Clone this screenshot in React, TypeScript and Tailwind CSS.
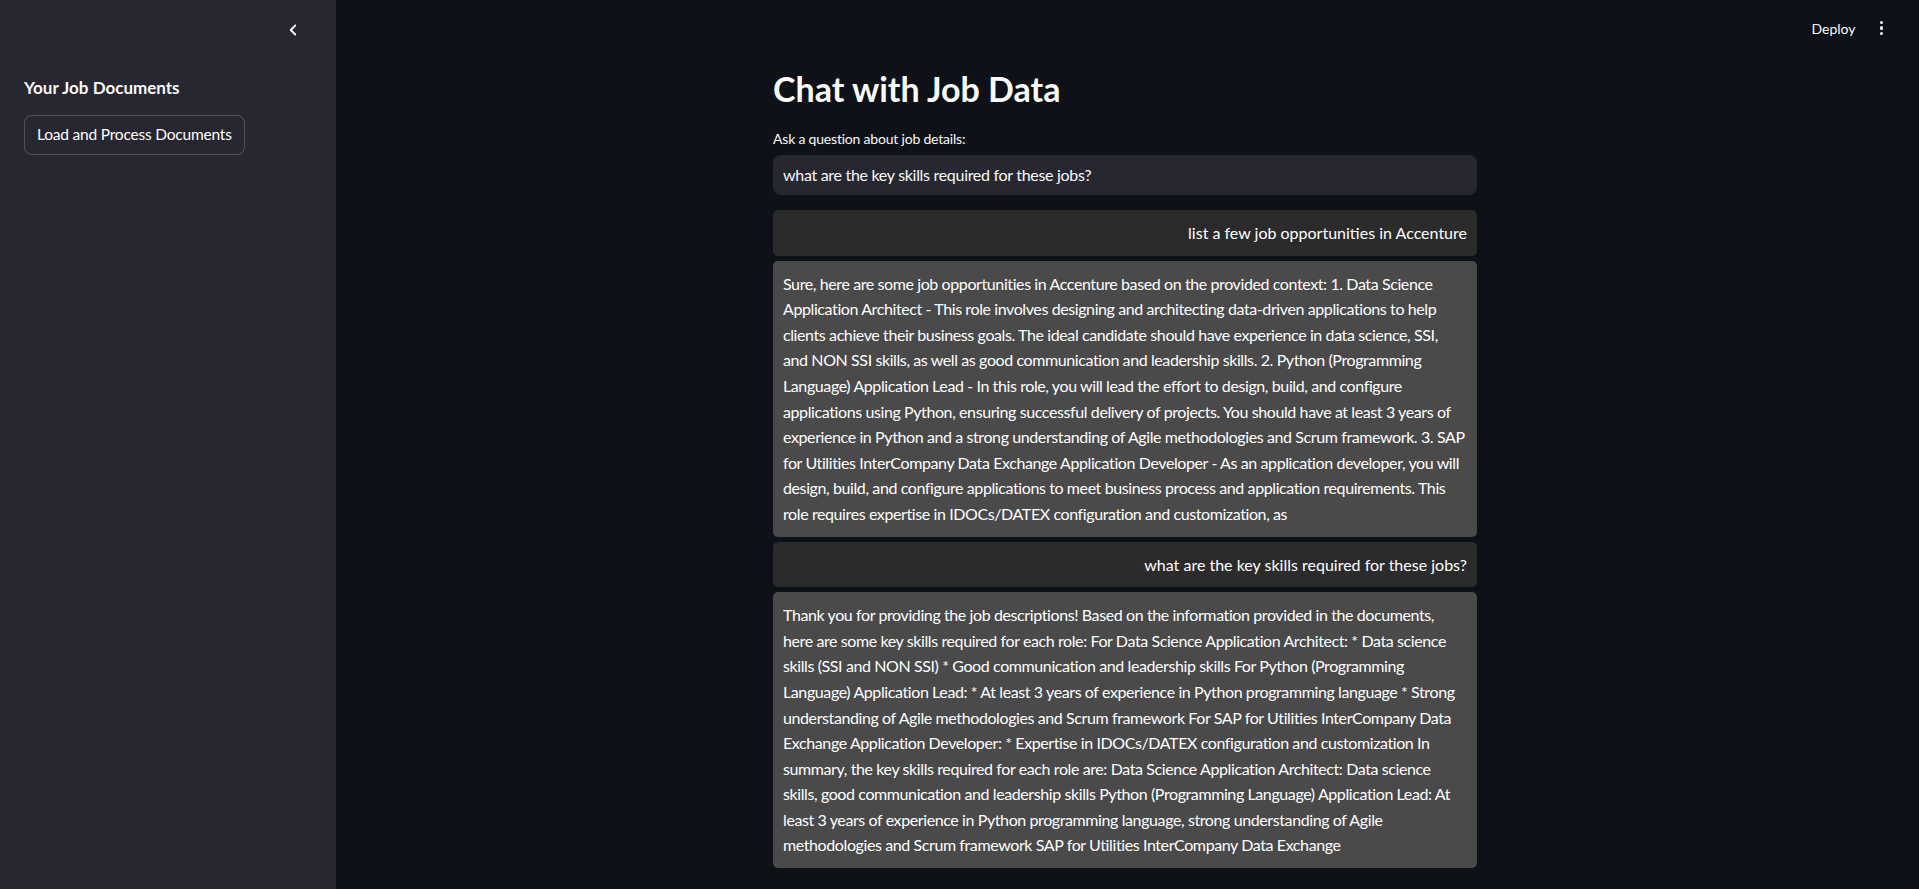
import React from 'react';
import { ChevronLeft } from 'lucide-react';

const firstAnswer = [
  'Sure, here are some job opportunities in Accenture based on the provided context: 1. Data Science',
  'Application Architect - This role involves designing and architecting data-driven applications to help',
  'clients achieve their business goals. The ideal candidate should have experience in data science, SSI,',
  'and NON SSI skills, as well as good communication and leadership skills. 2. Python (Programming',
  'Language) Application Lead - In this role, you will lead the effort to design, build, and configure',
  'applications using Python, ensuring successful delivery of projects. You should have at least 3 years of',
  'experience in Python and a strong understanding of Agile methodologies and Scrum framework. 3. SAP',
  'for Utilities InterCompany Data Exchange Application Developer - As an application developer, you will',
  'design, build, and configure applications to meet business process and application requirements. This',
  'role requires expertise in IDOCs/DATEX configuration and customization, as',
];

const secondAnswer = [
  'Thank you for providing the job descriptions! Based on the information provided in the documents,',
  'here are some key skills required for each role: For Data Science Application Architect: * Data science',
  'skills (SSI and NON SSI) * Good communication and leadership skills For Python (Programming',
  'Language) Application Lead: * At least 3 years of experience in Python programming language * Strong',
  'understanding of Agile methodologies and Scrum framework For SAP for Utilities InterCompany Data',
  'Exchange Application Developer: * Expertise in IDOCs/DATEX configuration and customization In',
  'summary, the key skills required for each role are: Data Science Application Architect: Data science',
  'skills, good communication and leadership skills Python (Programming Language) Application Lead: At',
  'least 3 years of experience in Python programming language, strong understanding of Agile',
  'methodologies and Scrum framework SAP for Utilities InterCompany Data Exchange',
];

const UserMessage = ({ text }: { text: string }) => (
  <div className="bg-[#2b2b2b] rounded-[5px] px-[10px] py-[10px] text-right leading-[25.6px]">{text}</div>
);

const BotMessage = ({ lines }: { lines: string[] }) => (
  <div className="bg-[#4a4a4a] rounded-[5px] px-[10px] py-[10px] leading-[25.6px] tracking-[-0.4px]">
    {lines.map((l, i) => (
      <span key={i} className="block whitespace-nowrap">
        {l}
      </span>
    ))}
  </div>
);

const App = () => {
  return (
    <div className="flex h-screen w-full overflow-hidden bg-[#0e1117] text-[#fafafa] font-['Lato',sans-serif]">
      <aside className="w-[336px] shrink-0 bg-[#262730] px-6">
        <div className="flex justify-end pt-[21px] pr-[10px]">
          <ChevronLeft className="w-[18px] h-[18px] text-white" strokeWidth={2.5} />
        </div>
        <h2 className="mt-[37px] text-[17px] font-bold leading-[24px]">Your Job Documents</h2>
        <button className="mt-[15px] h-[40px] px-[12px] rounded-lg border border-[#fafafa]/20 bg-[#262730] text-[15.5px] tracking-[-0.2px] text-white">
          Load and Process Documents
        </button>
      </aside>

      <main className="relative flex-1 overflow-hidden pr-[5px]">
        <div className="flex items-center justify-end h-[56px] pr-[31px] gap-[24px]">
          <span className="text-[14px] text-[#fafafa]">Deploy</span>
          <div className="flex flex-col gap-[2px] items-center">
            <span className="w-[3.5px] h-[3.5px] rounded-full bg-[#fafafa]" />
            <span className="w-[3.5px] h-[3.5px] rounded-full bg-[#fafafa]" />
            <span className="w-[3.5px] h-[3.5px] rounded-full bg-[#fafafa]" />
          </div>
        </div>

        <div className="mx-auto w-[704px]">
          <h1 className="mt-[11px] text-[34px] font-bold leading-[44px]">Chat with Job Data</h1>
          <label className="block mt-[18px] text-[14px] leading-[20px] tracking-[-0.2px]">
            Ask a question about job details:
          </label>
          <div className="mt-[6px] h-[40px] rounded-lg bg-[#262730] px-[10px] flex items-center text-[16px] tracking-[-0.3px]">
            what are the key skills required for these jobs?
          </div>

          <div className="mt-[15px] flex flex-col gap-[5px] text-[16px] text-white">
            <UserMessage text="list a few job opportunities in Accenture" />
            <BotMessage lines={firstAnswer} />
            <UserMessage text="what are the key skills required for these jobs?" />
            <BotMessage lines={secondAnswer} />
          </div>
        </div>
      </main>
    </div>
  );
};

export default App;
